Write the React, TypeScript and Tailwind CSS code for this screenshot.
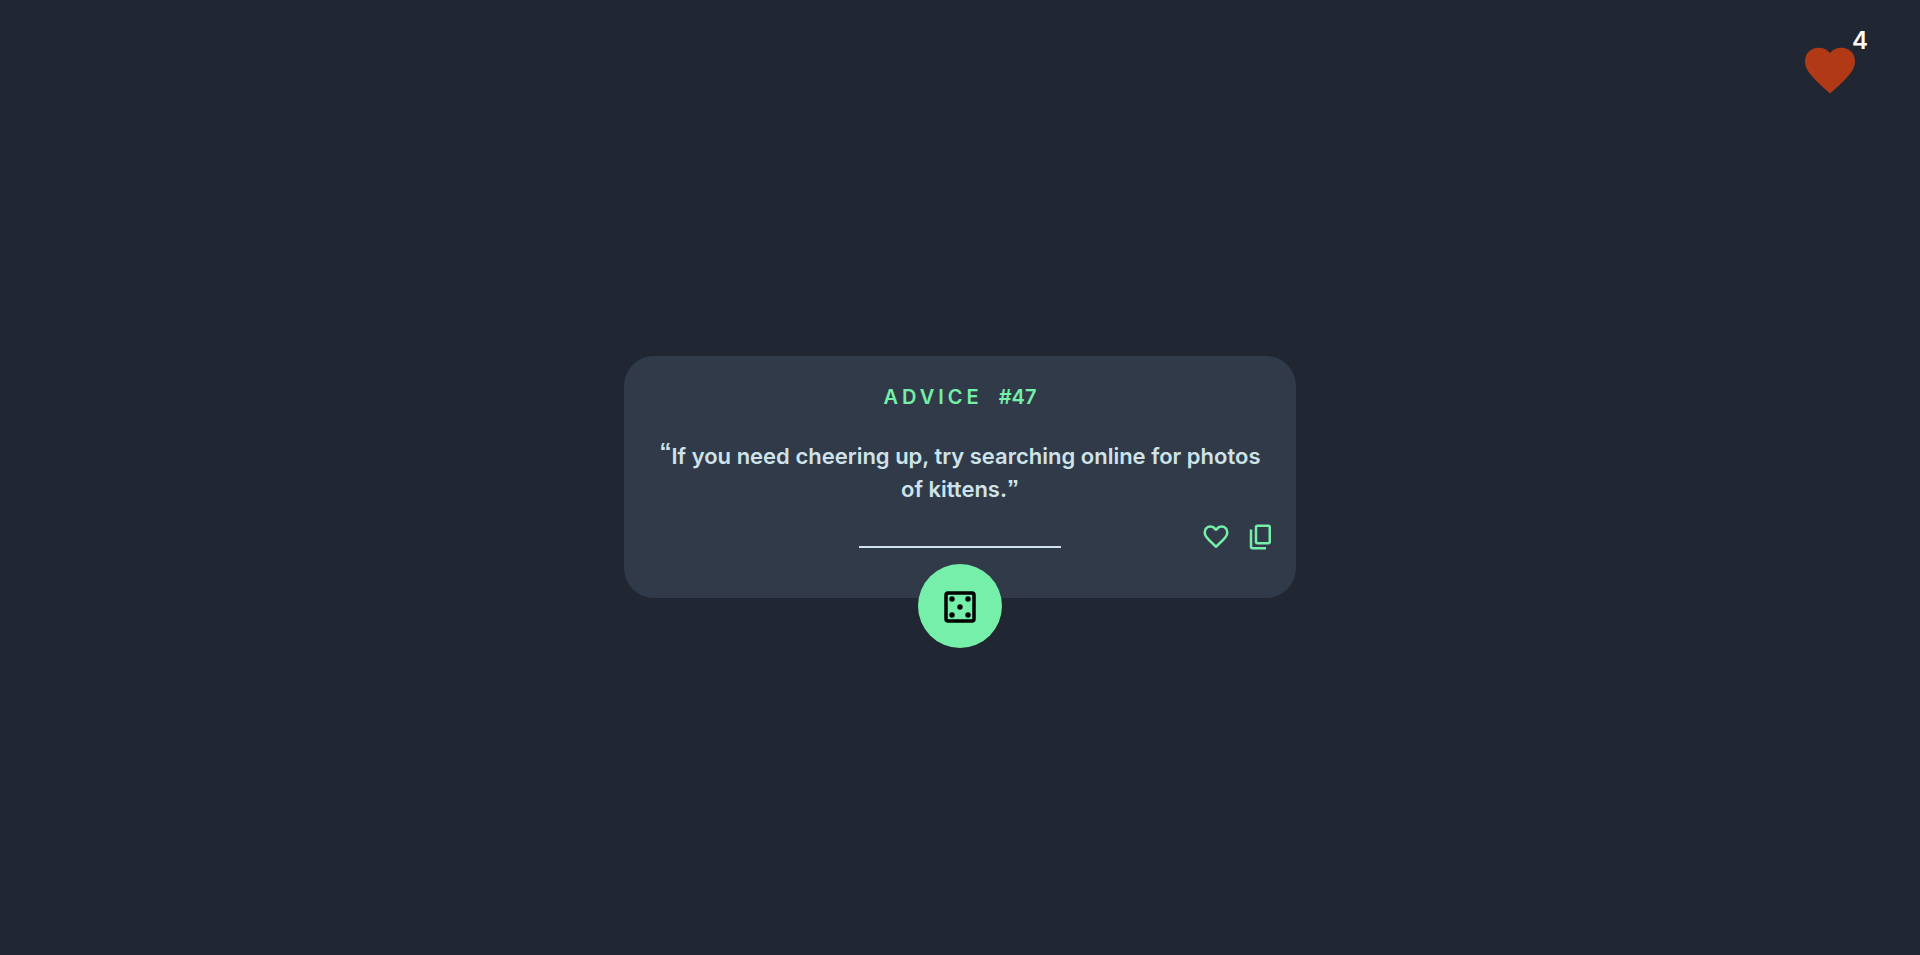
const heart =
  "M480-120l-58-52q-101-91-167-157T150-447.5Q111-500 95.5-544T80-634q0-94 63-157t157-63q52 0 99 22t81 62q34-40 81-62t99-22q94 0 157 63t63 157q0 46-15.5 90T810-447.5Q771-395 705-329T538-172l-58 52Z";
const heartInner =
  "M480-228q96-86 158-147.5t98-107q36-45.5 50-81t14-70.5q0-60-40-100t-100-40q-47 0-87 26.5T518-680h-76q-15-41-55-67.5T300-774q-60 0-100 40t-40 100q0 35 14 70.5t50 81q36 45.5 98 107T480-228Z";
const copy =
  "M360-240q-33 0-56.5-23.5T280-320v-480q0-33 23.5-56.5T360-880h360q33 0 56.5 23.5T800-800v480q0 33-23.5 56.5T720-240H360Zm0-80h360v-480H360v480ZM200-80q-33 0-56.5-23.5T120-160v-560h80v560h440v80H200Z";

function Dice() {
  return (
    <svg viewBox="0 0 42 42" className="size-[42px]" aria-hidden="true">
      <rect x="7" y="7" width="28" height="28" rx="2" fill="none" stroke="currentColor" strokeWidth="3.5" />
      <circle cx="13" cy="13" r="2.7" />
      <circle cx="29" cy="13" r="2.7" />
      <circle cx="21" cy="21" r="2.7" />
      <circle cx="13" cy="29" r="2.7" />
      <circle cx="29" cy="29" r="2.7" />
    </svg>
  );
}

export default function App() {
  return (
    <div className="flex min-h-screen flex-col bg-[#212732] font-['Inter',sans-serif]">
      <header className="flex h-0 justify-end px-[60px]">
        <button type="button" aria-label="Favourites" className="relative mt-[41px] size-[60px] text-[#b13916]">
          <svg viewBox="0 -960 960 960" className="size-full" fill="currentColor" aria-hidden="true">
            <path d={heart} />
          </svg>
          <span className="absolute -top-4 left-[52px] text-2xl font-semibold text-white">4</span>
        </button>
      </header>
      <main className="flex flex-1 items-center justify-center pb-0.5">
        <section className="relative flex w-[35%] min-w-80 flex-col rounded-[30px] bg-[#313a48] pt-[25px] pb-[46px] text-center">
          <h1 className="flex justify-center gap-4 text-xl leading-8 font-semibold text-[#75efa9]">
            <span className="tracking-[4px]">ADVICE</span>
            <span>#47</span>
          </h1>
          <p className="mt-[27px] px-6 text-[22px] leading-[33px] font-semibold text-[#cee3e9]">
            <sup className="-top-1 font-['Liberation_Sans',sans-serif] text-2xl leading-none font-bold">“</sup>If
            you need cheering up, try searching online for photos of kittens.
            <span className="font-['Liberation_Sans',sans-serif] text-2xl leading-none font-bold">”</span>
          </p>
          <div className="mt-4 grid grid-cols-[1fr_30%_1fr] items-center">
            <hr className="col-start-2 mt-5 border-t-2 border-[#cee3e9]" />
            <div className="flex justify-end gap-[15px] pr-5 text-[#75efa9]">
              <button type="button" aria-label="Like">
                <svg viewBox="0 -960 960 960" className="size-[30px]" fill="currentColor" aria-hidden="true">
                  <path fillRule="evenodd" d={heart + heartInner} />
                </svg>
              </button>
              <button type="button" aria-label="Copy">
                <svg viewBox="0 -960 960 960" className="size-[30px]" fill="currentColor" aria-hidden="true">
                  <path d={copy} />
                </svg>
              </button>
            </div>
          </div>
          <button
            type="button"
            aria-label="New advice"
            className="absolute -bottom-[50px] left-1/2 flex size-[84px] -translate-x-1/2 items-center justify-center rounded-full bg-[#75efa9] pt-0.5 text-black"
          >
            <Dice />
          </button>
        </section>
      </main>
    </div>
  );
}
